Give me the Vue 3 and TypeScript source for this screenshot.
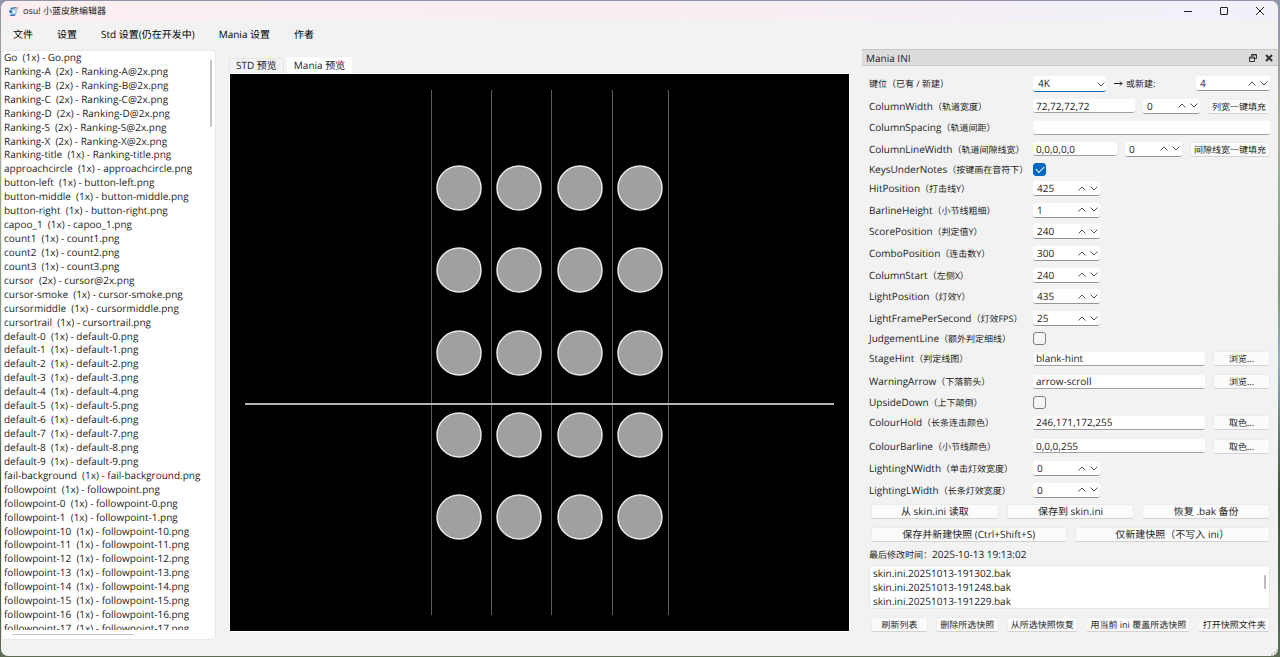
<script setup lang="ts">
import { ref } from 'vue'

interface IniRow {
  id: string
  name: string
  hint: string
  kind: 'keys' | 'fill' | 'line' | 'check' | 'spin' | 'pick'
  value?: string
  checked?: boolean
  action?: string
}

const menus: string[] = ['文件', '设置', 'Std 设置(仍在开发中)', 'Mania 设置', '作者']

const single = (name: string): string => `${name}  (1x) - ${name}.png`
const double = (name: string): string => `${name}  (2x) - ${name}@2x.png`
const range = (prefix: string, from: number, to: number): string[] =>
  Array.from({ length: to - from + 1 }, (_, i) => single(`${prefix}-${from + i}`))

const files: string[] = [
  single('Go'),
  ...['A', 'B', 'C', 'D', 'S', 'X'].map((r) => double(`Ranking-${r}`)),
  ...['Ranking-title', 'approachcircle', 'button-left', 'button-middle', 'button-right', 'capoo_1', 'count1', 'count2', 'count3'].map(single),
  double('cursor'),
  ...['cursor-smoke', 'cursormiddle', 'cursortrail'].map(single),
  ...range('default', 0, 9),
  single('fail-background'),
  single('followpoint'),
  ...range('followpoint', 0, 1),
  ...range('followpoint', 10, 17),
]

const rows = ref<IniRow[]>([
  { id: 'keys', name: '', hint: '键位（已有 / 新建）', kind: 'keys', value: '4' },
  { id: 'cw', name: 'ColumnWidth', hint: '（轨道宽度）', kind: 'fill', value: '72,72,72,72', action: '列宽一键填充' },
  { id: 'cs', name: 'ColumnSpacing', hint: '（轨道间距）', kind: 'line', value: '' },
  { id: 'clw', name: 'ColumnLineWidth', hint: '（轨道间隙线宽）', kind: 'fill', value: '0,0,0,0,0', action: '间隙线宽一键填充' },
  { id: 'kun', name: 'KeysUnderNotes', hint: '（按键画在音符下）', kind: 'check', checked: true },
  { id: 'hit', name: 'HitPosition', hint: '（打击线Y）', kind: 'spin', value: '425' },
  { id: 'bar', name: 'BarlineHeight', hint: '（小节线粗细）', kind: 'spin', value: '1' },
  { id: 'score', name: 'ScorePosition', hint: '（判定值Y）', kind: 'spin', value: '240' },
  { id: 'combo', name: 'ComboPosition', hint: '（连击数Y）', kind: 'spin', value: '300' },
  { id: 'start', name: 'ColumnStart', hint: '（左侧X）', kind: 'spin', value: '240' },
  { id: 'light', name: 'LightPosition', hint: '（灯效Y）', kind: 'spin', value: '435' },
  { id: 'fps', name: 'LightFramePerSecond', hint: '（灯效FPS）', kind: 'spin', value: '25' },
  { id: 'judge', name: 'JudgementLine', hint: '（额外判定细线）', kind: 'check', checked: false },
  { id: 'stage', name: 'StageHint', hint: '（判定线图）', kind: 'pick', value: 'blank-hint', action: '浏览...' },
  { id: 'arrow', name: 'WarningArrow', hint: '（下落箭头）', kind: 'pick', value: 'arrow-scroll', action: '浏览...' },
  { id: 'upside', name: 'UpsideDown', hint: '（上下颠倒）', kind: 'check', checked: false },
  { id: 'hold', name: 'ColourHold', hint: '（长条连击颜色）', kind: 'pick', value: '246,171,172,255', action: '取色...' },
  { id: 'cbar', name: 'ColourBarline', hint: '（小节线颜色）', kind: 'pick', value: '0,0,0,255', action: '取色...' },
  { id: 'ln', name: 'LightingNWidth', hint: '（单击灯效宽度）', kind: 'spin', value: '0' },
  { id: 'll', name: 'LightingLWidth', hint: '（长条灯效宽度）', kind: 'spin', value: '0' },
])

const fillValue = ref<Record<string, string>>({ cw: '0', clw: '0' })
const keyMode = ref('4K')
const snapshots: string[] = ['skin.ini.20251013-191302.bak', 'skin.ini.20251013-191248.bak', 'skin.ini.20251013-191229.bak']
const noteX: number[] = [229, 289, 350, 410]
const noteY: number[] = [114, 196, 279, 361, 443]
const lineX: number[] = [201, 261, 321, 382, 438]
</script>

<template>
  <div class="desktop">
    <div class="window">
      <header class="titlebar">
        <svg class="logo" viewBox="0 0 12 12" aria-hidden="true">
          <path d="M1 5 3 2 8 1l3 1-1 4-1 3-2 2H3l1-3-2-1Z" fill="#a9cfe6" />
          <path d="M3 2 8 1l1 1-3 1-3 1Z" fill="#4a7fb5" />
          <path d="M1 5h3l1 2-3 1Z" fill="#2372bd" />
          <path d="M9 1h2v2H9Z" fill="#ee9d91" />
          <path d="M3 9h4l1 2H2Z" fill="#3f74d8" />
          <path d="M5 5h3l-1 3H5Z" fill="#fff" />
        </svg>
        <span class="title">osu! 小蓝皮肤编辑器</span>
        <button class="winbtn" aria-label="最小化"><svg viewBox="0 0 10 10"><path d="M1 5.500h8" /></svg></button>
        <button class="winbtn" aria-label="最大化"><svg viewBox="0 0 10 10"><rect x="1.500" y="1.500" width="7" height="7" rx="0.500" /></svg></button>
        <button class="winbtn" aria-label="关闭"><svg viewBox="0 0 10 10"><path d="m1 1 8 8M9 1 1 9" /></svg></button>
      </header>

      <nav class="menubar">
        <button v-for="m in menus" :key="m">{{ m }}</button>
      </nav>

      <main class="body">
        <section class="files">
          <div class="clip">
            <ul>
              <li v-for="f in files" :key="f">{{ f }}</li>
            </ul>
          </div>
          <i class="vbar"></i>
          <i class="hbar"></i>
        </section>

        <section class="preview">
          <div class="tabs" role="tablist">
            <button role="tab" aria-selected="false">STD 预览</button>
            <button role="tab" aria-selected="true" class="active">Mania 预览</button>
          </div>
          <div class="stage">
            <svg viewBox="0 0 619 557" preserveAspectRatio="none">
              <rect v-for="x in lineX" :key="x" :x="x" y="16" width="1" height="525" fill="#5c5c5c" />
              <rect x="15" y="329" width="589" height="2" fill="#b4b4b4" />
              <template v-for="y in noteY" :key="y">
                <circle v-for="x in noteX" :key="x" :cx="x" :cy="y" r="22" fill="#a0a0a0" stroke="#e6e6e6" stroke-width="1.500" />
              </template>
            </svg>
          </div>
        </section>

        <aside class="dock">
          <div class="dockbar">
            <span>Mania INI</span>
            <button aria-label="浮动">
              <svg viewBox="0 0 8 8"><path d="M2.500 2.500v-2h5v4h-2M.5 3h5v4.500h-5ZM.5 4h5M2.500 1h5" /></svg>
            </button>
            <button aria-label="关闭面板">
              <svg class="thick" viewBox="0 0 8 8"><path d="m1 1 6 6M7 1 1 7" /></svg>
            </button>
          </div>

          <div class="content">
            <div class="form">
              <div v-for="r in rows" :key="r.id" class="row" :class="r.kind">
                <label class="name" :for="r.id">{{ r.name }}<span class="hint">{{ r.hint }}</span></label>
                <div class="field">
                  <template v-if="r.kind === 'keys'">
                    <span class="combo">
                      <select v-model="keyMode" aria-label="已有键位"><option>4K</option></select>
                      <svg class="chev" viewBox="0 0 8 5"><path d="m.5.5 3.500 3.500 3.500-3.500" /></svg>
                    </span>
                    <span class="arrowtext"><svg viewBox="0 0 9 7"><path d="M0 3.500h8M6 1.500l2 2-2 2" /></svg>或新建:</span>
                  </template>
                  <input v-if="r.kind === 'fill' || r.kind === 'line' || r.kind === 'pick'" :id="r.id" v-model="r.value" class="textbox" type="text" />
                  <input v-if="r.kind === 'check'" :id="r.id" v-model="r.checked" class="box" type="checkbox" />
                  <span v-if="r.kind === 'spin' || r.kind === 'keys'" class="spinner">
                    <input :id="r.id" v-model="r.value" type="text" inputmode="numeric" />
                    <button aria-label="增加"><svg class="chev" viewBox="0 0 8 5"><path d="M.5 4.500 4 1l3.500 3.500" /></svg></button>
                    <button aria-label="减少"><svg class="chev" viewBox="0 0 8 5"><path d="m.5.5 3.500 3.500 3.500-3.500" /></svg></button>
                  </span>
                  <span v-if="r.kind === 'fill'" class="spinner narrow">
                    <input v-model="fillValue[r.id]" type="text" inputmode="numeric" :aria-label="r.action" />
                    <button aria-label="增加"><svg class="chev" viewBox="0 0 8 5"><path d="M.5 4.500 4 1l3.500 3.500" /></svg></button>
                    <button aria-label="减少"><svg class="chev" viewBox="0 0 8 5"><path d="m.5.5 3.500 3.500 3.500-3.500" /></svg></button>
                  </span>
                  <button v-if="r.action" class="push">{{ r.action }}</button>
                </div>
              </div>
            </div>

            <div class="actions">
              <button class="push">从 skin.ini 读取</button>
              <button class="push">保存到 skin.ini</button>
              <button class="push">恢复 .bak 备份</button>
            </div>
            <div class="actions">
              <button class="push">保存并新建快照 (Ctrl+Shift+S)</button>
              <button class="push">仅新建快照（不写入 ini）</button>
            </div>
            <p class="stamp"><span class="hint">最后修改时间：</span>2025-10-13 19:13:02</p>
            <div class="snaps">
              <ul>
                <li v-for="s in snapshots" :key="s">{{ s }}</li>
              </ul>
              <i></i>
            </div>
            <div class="actions tail">
              <button class="push wide">刷新列表</button>
              <button class="push">删除所选快照</button>
              <button class="push">从所选快照恢复</button>
              <button class="push">用当前 ini 覆盖所选快照</button>
              <button class="push">打开快照文件夹</button>
            </div>
          </div>
        </aside>
      </main>
      <svg class="grip" viewBox="0 0 8 8" aria-hidden="true">
        <path d="M6 0h2v2H6ZM3 3h2v2H3ZM6 3h2v2H6ZM0 6h2v2H0ZM3 6h2v2H3ZM6 6h2v2H6Z" fill="#b4b4b4" />
      </svg>
    </div>
  </div>
</template>

<style>
html,
body,
#app {
  height: 100%;
}
body {
  margin: 0;
}
</style>

<style scoped>
* {
  box-sizing: border-box;
}
.desktop {
  height: 100%;
  padding: 1px 2px 1px 1px;
  overflow: hidden;
  background: linear-gradient(180deg, #8f93a8, #a9b39a 20%, #7f9a80 45%, #8fb0bb 55%, #3f5138 75%, #5d6b55);
  font-family: "Open Sans", "Noto Sans CJK SC", sans-serif;
  font-size: 10px;
  line-height: 14px;
  color: #1c1c1c;
  text-rendering: geometricPrecision;
}
button,
input,
select {
  margin: 0;
  padding: 0;
  border: 0;
  background: none;
  font: inherit;
  color: inherit;
  text-rendering: inherit;
  outline: 0;
  white-space: nowrap;
}
svg {
  display: block;
  fill: none;
}
ul,
p {
  margin: 0;
  padding: 0;
  list-style: none;
}
.window {
  position: relative;
  display: flex;
  flex-direction: column;
  height: 100%;
  border-radius: 7px;
  background: #f2f2f2;
  overflow: hidden;
}
.titlebar {
  display: flex;
  align-items: center;
  flex: none;
  height: 20px;
  padding: 0 0 0 7px;
  background: linear-gradient(90deg, #faeef0, #f8eef2 50%, #f1f0f9);
}
.logo {
  width: 11px;
  height: 11px;
  margin-right: 4px;
}
.title {
  flex: 1;
  font-size: 9px;
}
.winbtn {
  display: grid;
  place-items: center;
  width: 36px;
  height: 20px;
}
.winbtn svg {
  width: 10px;
  height: 10px;
  stroke: #222;
  stroke-width: 1;
}
.menubar {
  display: flex;
  flex: none;
  gap: 24px;
  height: 28px;
  padding: 0 12px 2px;
  font-size: 10px;
  color: #000;
}
.body {
  display: flex;
  flex: 1;
  min-height: 0;
}
.files {
  position: relative;
  flex: none;
  width: 215px;
  margin: 1px 0 16px;
  padding: 0 2px 9px;
  border: 1px solid #e9e9e9;
  border-radius: 4px;
  background: #fff;
}
.clip {
  height: 100%;
  overflow: hidden;
}
.files ul {
  display: grid;
  grid-auto-rows: 1fr;
  height: calc(100% + 6px);
  margin-top: -1px;
}
.files li {
  display: flex;
  align-items: center;
  min-height: 0;
  white-space: pre;
}
.vbar,
.hbar {
  position: absolute;
  border-radius: 1px;
  background: #c4c4c4;
}
.vbar {
  top: 9px;
  right: 3px;
  width: 2px;
  height: 67px;
}
.hbar {
  bottom: 4px;
  left: 10px;
  width: 122px;
  height: 1px;
}
.preview {
  display: flex;
  flex: 1;
  flex-direction: column;
  min-width: 0;
  margin: 8px 12px 24px 13px;
}
.tabs {
  display: flex;
  align-items: flex-end;
  flex: none;
  gap: 3px;
  height: 16px;
}
.tabs button {
  height: 15px;
  padding: 0 6px 1px;
  border: 1px solid #e6e6e6;
  border-bottom: 0;
  line-height: 13px;
}
.tabs .active {
  height: 16px;
  border-color: #fff;
  background: #fff;
}
.stage {
  flex: 1;
  min-height: 0;
  border: 1px solid #fff;
  background: #000;
}
.stage svg {
  width: 100%;
  height: 100%;
}
.dock {
  display: flex;
  flex: none;
  flex-direction: column;
  width: 416px;
}
.dockbar {
  display: flex;
  align-items: center;
  flex: none;
  gap: 8px;
  height: 17px;
  padding: 0 5px 0 4px;
  border: 1px solid #c8c8c8;
  border-width: 1px 0;
  background: #dcdcdc;
}
.dockbar span {
  flex: 1;
}
.dockbar svg {
  width: 8px;
  height: 8px;
  stroke: #333;
}
.dockbar .thick {
  stroke-width: 2;
}
.content {
  display: flex;
  flex: 1;
  flex-direction: column;
  min-height: 0;
  padding: 6px 8px 24px 7px;
}
.form {
  display: flex;
  flex: 1;
  flex-direction: column;
  min-height: 0;
  margin-bottom: 3px;
}
.row {
  display: flex;
  flex: 65 1 0;
  align-items: center;
  min-height: 0;
}
.row.keys,
.row.pick {
  flex-grow: 70;
}
.row.check {
  flex-grow: 53;
}
.name {
  flex: none;
  width: 164px;
  white-space: nowrap;
}
.hint {
  font-size: 9px;
}
.field {
  display: flex;
  flex: 1;
  align-items: center;
  gap: 8px;
  min-width: 0;
}
.combo {
  position: relative;
  width: 73px;
  height: 16px;
  border-bottom: 1px solid #0067c0;
  border-radius: 3px;
  background: #fff;
}
.combo select {
  width: 100%;
  height: 15px;
  padding-left: 5px;
  appearance: none;
}
.combo .chev {
  position: absolute;
  top: 6px;
  right: 1px;
  pointer-events: none;
}
.chev {
  width: 8px;
  height: 5px;
  stroke: #555;
}
.arrowtext {
  display: flex;
  flex: 1;
  align-items: center;
  gap: 3px;
  font-size: 9px;
}
.arrowtext svg {
  width: 9px;
  height: 7px;
  stroke: #222;
}
.textbox {
  flex: 1;
  min-width: 0;
  height: 14px;
  padding: 0 3px;
  border-bottom: 1px solid #a0a0a0;
  border-radius: 3px;
  background: #fff;
}
.spinner {
  display: flex;
  align-items: center;
  gap: 4px;
  width: 67px;
  height: 15px;
  padding: 0 2px 0 4px;
  border-bottom: 1px solid #949494;
  border-radius: 3px;
  background: #fff;
}
.spinner.narrow {
  width: 57px;
}
.keys .spinner {
  width: 74px;
}
.spinner input {
  flex: 1;
  width: 0;
  min-width: 0;
  height: 14px;
}
.box {
  display: grid;
  place-items: center;
  width: 13px;
  height: 13px;
  appearance: none;
  border: 1px solid #808080;
  border-radius: 3px;
  background: #f6f6f6;
}
.box:checked {
  border-color: #0067c0;
  background: #0067c0;
}
.box:checked::before {
  content: "";
  width: 7px;
  height: 4px;
  border: solid #fff;
  border-width: 0 0 1px 1px;
  transform: translateY(-1px) rotate(-45deg);
}
.push {
  height: 15px;
  padding: 0 2px;
  border: 1px solid #ececec;
  border-bottom-color: #d2d2d2;
  border-radius: 3px;
  background: #fbfbfb;
  line-height: 13px;
}
.field .push,
.tail .push {
  font-size: 9px;
}
.fill .push {
  padding: 0 3px;
}
.pick .push {
  width: 57px;
}
.actions {
  display: flex;
  flex: none;
  gap: 8px;
  margin-bottom: 8px;
  padding: 0 0 0 2px;
}
.actions .push {
  flex: 1;
}
.stamp {
  flex: none;
  margin-top: -3px;
}
.snaps {
  position: relative;
  flex: none;
  margin: 3px 0 8px;
  padding: 0 3px;
  border: 1px solid #e6e6e6;
  border-radius: 3px;
  background: #fff;
}
.snaps i {
  position: absolute;
  top: 9px;
  right: 3px;
  width: 2px;
  height: 14px;
  background: #bdbdbd;
}
.actions.tail {
  margin: 0;
}
.tail .push {
  flex: 1 1 auto;
}
.tail .wide {
  flex: none;
  width: 57px;
}
.grip {
  position: absolute;
  right: 0;
  bottom: 0;
  width: 7px;
  height: 7px;
}
</style>
